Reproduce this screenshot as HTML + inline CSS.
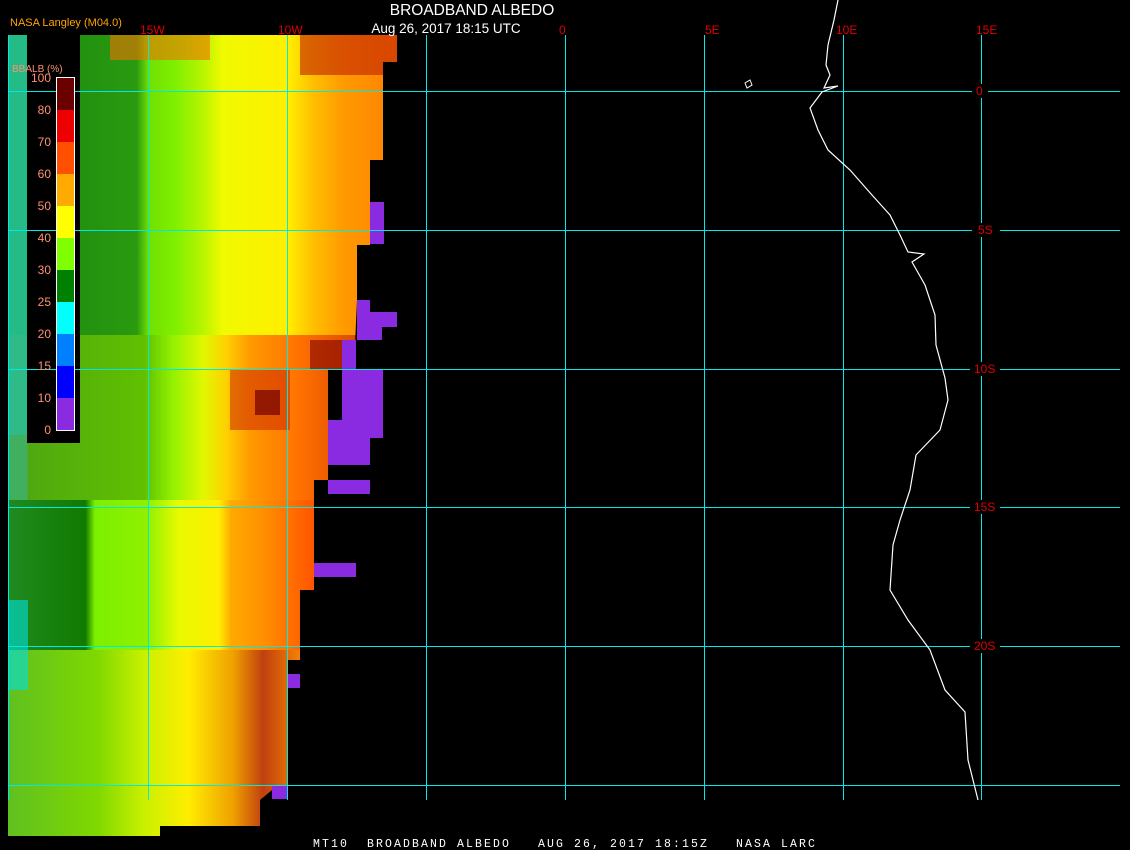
<!DOCTYPE html>
<html><head><style>
html,body{margin:0;padding:0;background:#000;}
svg{display:block}
</style></head><body>
<svg width="1130" height="850" xmlns="http://www.w3.org/2000/svg" shape-rendering="crispEdges">
<rect width="1130" height="850" fill="#000"/>
<defs>
<clipPath id="d"><polygon points="8,35 397,35 397,62 383,62 383,160 370,160 370,245 357,245 357,300 355,345 342,345 342,370 328,370 328,480 314,480 314,590 300,590 300,660 287,660 287,790 272,790 260,800 260,826 160,826 160,836 8,836"/></clipPath>
<linearGradient id="rA" x1="0" x2="1"><stop offset="0" stop-color="#30b060"/><stop offset="0.05" stop-color="#30b060"/><stop offset="0.05" stop-color="#1a8a10"/><stop offset="0.33" stop-color="#2a9a10"/><stop offset="0.36" stop-color="#70e000"/><stop offset="0.43" stop-color="#80f000"/><stop offset="0.5" stop-color="#b8f400"/><stop offset="0.55" stop-color="#f0fa00"/><stop offset="0.72" stop-color="#ffee00"/><stop offset="0.78" stop-color="#ffc000"/><stop offset="0.86" stop-color="#ff9a00"/><stop offset="1" stop-color="#ff8000"/></linearGradient>
<linearGradient id="rB" x1="0" x2="1"><stop offset="0" stop-color="#40b060"/><stop offset="0.05" stop-color="#40b060"/><stop offset="0.05" stop-color="#50a810"/><stop offset="0.35" stop-color="#60c000"/><stop offset="0.42" stop-color="#90f000"/><stop offset="0.5" stop-color="#e0f800"/><stop offset="0.56" stop-color="#ffd000"/><stop offset="0.62" stop-color="#ff9a00"/><stop offset="0.75" stop-color="#ff7000"/><stop offset="1" stop-color="#c03000"/></linearGradient>
<linearGradient id="rC" x1="0" x2="1"><stop offset="0" stop-color="#208a20"/><stop offset="0.25" stop-color="#107a00"/><stop offset="0.28" stop-color="#7cf000"/><stop offset="0.45" stop-color="#90f000"/><stop offset="0.55" stop-color="#e8fa00"/><stop offset="0.68" stop-color="#ffee00"/><stop offset="0.72" stop-color="#ffaa00"/><stop offset="0.82" stop-color="#ff9000"/><stop offset="1" stop-color="#ff5000"/></linearGradient>
<linearGradient id="rD" x1="0" x2="1"><stop offset="0" stop-color="#60c020"/><stop offset="0.3" stop-color="#80d800"/><stop offset="0.45" stop-color="#c8f000"/><stop offset="0.6" stop-color="#ffee00"/><stop offset="0.75" stop-color="#f0a000"/><stop offset="0.85" stop-color="#c04010"/><stop offset="1" stop-color="#ff9000"/></linearGradient>
</defs>
<g clip-path="url(#d)">
<rect x="8" y="35" width="390" height="300" fill="url(#rA)"/>
<rect x="8" y="335" width="390" height="165" fill="url(#rB)"/>
<rect x="8" y="500" width="310" height="150" fill="url(#rC)"/>
<rect x="8" y="650" width="300" height="190" fill="url(#rD)"/>
<rect x="110" y="35" width="100" height="25" fill="#f07000" opacity="0.6"/>
<rect x="300" y="35" width="97" height="40" fill="#c02000" opacity="0.6"/>
<rect x="230" y="370" width="60" height="60" fill="#d03000" opacity="0.6"/>
<rect x="255" y="390" width="25" height="25" fill="#700000" opacity="0.7"/>
<rect x="310" y="340" width="35" height="30" fill="#800000" opacity="0.6"/>
<rect x="8" y="600" width="20" height="90" fill="#00e0e0" opacity="0.6"/>
<rect x="8" y="35" width="20" height="400" fill="#10d0d0" opacity="0.35"/>
</g>
<rect x="27" y="35" width="53" height="408" fill="#000"/>
<g fill="#8a2be2">
<rect x="370" y="202" width="14" height="42"/><rect x="357" y="300" width="13" height="12"/><rect x="357" y="312" width="40" height="15"/><rect x="357" y="327" width="25" height="13"/><rect x="342" y="340" width="14" height="30"/><rect x="342" y="370" width="41" height="68"/><rect x="328" y="420" width="42" height="45"/><rect x="328" y="480" width="42" height="14"/><rect x="314" y="563" width="42" height="14"/><rect x="287" y="674" width="13" height="14"/><rect x="272" y="786" width="15" height="13"/>
</g>
<g fill="#00e8e8">
<rect x="8" y="35" width="1" height="765"/><rect x="148" y="35" width="1" height="765"/><rect x="287" y="35" width="1" height="765"/><rect x="426" y="35" width="1" height="765"/><rect x="565" y="35" width="1" height="765"/><rect x="704" y="35" width="1" height="765"/><rect x="843" y="35" width="1" height="765"/><rect x="981" y="35" width="1" height="765"/>
<rect x="8" y="91" width="1112" height="1"/><rect x="8" y="230" width="1112" height="1"/><rect x="8" y="369" width="1112" height="1"/><rect x="8" y="507" width="1112" height="1"/><rect x="8" y="646" width="1112" height="1"/><rect x="8" y="785" width="1112" height="1"/>
</g>
<polyline fill="none" stroke="#fff" stroke-width="1.2" shape-rendering="auto" points="838,0 834,20 828,45 826,65 830,75 824,88 838,86 822,92 810,108 818,130 828,150 850,170 872,195 890,215 900,235 908,252 924,254 912,262 925,285 935,315 936,345 945,378 948,400 940,430 916,455 910,490 900,520 893,545 890,590 908,620 930,650 945,690 965,712 968,760 978,800"/>
<polygon fill="none" stroke="#fff" shape-rendering="auto" points="745,83 750,80 752,85 747,88"/>
<g fill="#000">
<rect x="972" y="84" width="16" height="14"/><rect x="972" y="223" width="28" height="14"/><rect x="970" y="362" width="30" height="14"/><rect x="970" y="500" width="30" height="14"/><rect x="970" y="639" width="30" height="14"/>
</g>
<g font-family="Liberation Sans, sans-serif" fill="#e00000" font-size="12">
<text x="140" y="34">15W</text><text x="278" y="34">10W</text><text x="559" y="34">0</text><text x="705" y="34">5E</text><text x="836" y="34">10E</text><text x="976" y="34">15E</text>
<text x="976" y="95">0</text><text x="978" y="234">5S</text><text x="974" y="373">10S</text><text x="974" y="511">15S</text><text x="974" y="650">20S</text>
</g>
<text x="472" y="15" fill="#fff" font-family="Liberation Sans, sans-serif" font-size="15.5" text-anchor="middle">BROADBAND ALBEDO</text>
<text x="446" y="33" fill="#fff" font-family="Liberation Sans, sans-serif" font-size="13.5" text-anchor="middle">Aug 26, 2017 18:15 UTC</text>
<text x="10" y="26" fill="#ffa500" font-family="Liberation Sans, sans-serif" font-size="11">NASA Langley (M04.0)</text>
<text x="12" y="72" fill="#ff9070" font-family="Liberation Sans, sans-serif" font-size="10">BBALB (%)</text>
<rect x="56" y="77" width="19" height="354" fill="#fff"/>
<rect x="57" y="78" width="17" height="32" fill="#6a0000"/><rect x="57" y="110" width="17" height="32" fill="#ee0000"/><rect x="57" y="142" width="17" height="32" fill="#ff5000"/><rect x="57" y="174" width="17" height="32" fill="#ffaa00"/><rect x="57" y="206" width="17" height="32" fill="#ffff00"/><rect x="57" y="238" width="17" height="32" fill="#80ff00"/><rect x="57" y="270" width="17" height="32" fill="#008000"/><rect x="57" y="302" width="17" height="32" fill="#00ffff"/><rect x="57" y="334" width="17" height="32" fill="#0080ff"/><rect x="57" y="366" width="17" height="32" fill="#0000ff"/><rect x="57" y="398" width="17" height="32" fill="#8a2be2"/>
<g font-family="Liberation Sans, sans-serif" fill="#ff9070" font-size="12" text-anchor="end">
<text x="51" y="82">100</text><text x="51" y="114">80</text><text x="51" y="146">70</text><text x="51" y="178">60</text><text x="51" y="210">50</text><text x="51" y="242">40</text><text x="51" y="274">30</text><text x="51" y="306">25</text><text x="51" y="338">20</text><text x="51" y="370">15</text><text x="51" y="402">10</text><text x="51" y="434">0</text>
</g>
<text x="313" y="847" fill="#fff" font-family="Liberation Mono, monospace" font-size="11.5" letter-spacing="2.1" xml:space="preserve">MT10  BROADBAND ALBEDO   AUG 26, 2017 18:15Z   NASA LARC</text>
</svg>
</body></html>
